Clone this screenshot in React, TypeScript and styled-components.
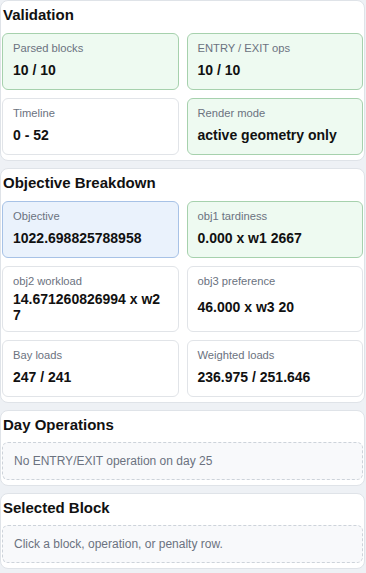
import React from 'react';
import styled, { createGlobalStyle } from 'styled-components';

type Tone = 'plain' | 'ok' | 'info';

interface Metric {
  label: string;
  value: string;
  tone?: Tone;
}

const GlobalStyle = createGlobalStyle`
  html, body {
    margin: 0;
    padding: 0;
    background: #eef1f5;
  }
  body {
    font-family: "Liberation Sans", Arial, sans-serif;
    color: #111827;
  }
`;

const Page = styled.div`
  display: flex;
  flex-direction: column;
  gap: 7px;
  padding: 0 1px 8px 0;
  width: 365px;
`;

const Panel = styled.section`
  background: #ffffff;
  border: 1px solid #dfe3e8;
  border-radius: 8px;
  padding: 5px 1px 5px 1px;
`;

const PanelTitle = styled.h2<{ $tight?: boolean }>`
  margin: 0 0 ${({ $tight }) => ($tight ? '9px' : '10px')} 1px;
  font-size: 15px;
  font-weight: 700;
  line-height: 17px;
  color: #111111;
`;

const CardGrid = styled.div`
  display: grid;
  grid-template-columns: 1fr 1fr;
  gap: 8px 8px;
`;

const toneStyles: Record<Tone, { bg: string; border: string }> = {
  plain: { bg: '#ffffff', border: '#e1e4e8' },
  ok: { bg: '#eefaf1', border: '#a6d1ad' },
  info: { bg: '#eaf2fc', border: '#a7c2e6' },
};

const Card = styled.div<{ $tone: Tone }>`
  box-sizing: border-box;
  min-height: 57px;
  display: flex;
  flex-direction: column;
  padding: 8px 10px;
  border-radius: 6px;
  border: 1px solid ${({ $tone }) => toneStyles[$tone].border};
  background: ${({ $tone }) => toneStyles[$tone].bg};
`;

const CardLabel = styled.div`
  font-size: 11.2px;
  color: #6b7280;
  margin-bottom: 4px;
`;

const CardValue = styled.div`
  margin: auto 0;
  font-size: 14px;
  font-weight: 700;
  line-height: 16px;
  color: #111111;
  word-break: break-all;
`;

const EmptyBox = styled.div`
  border: 1px dashed #cdd3da;
  border-radius: 6px;
  background: #f8f9fb;
  padding: 10.5px 11px;
  font-size: 12px;
  line-height: 15px;
  color: #6b7280;
`;

const validation: Metric[] = [
  { label: 'Parsed blocks', value: '10 / 10', tone: 'ok' },
  { label: 'ENTRY / EXIT ops', value: '10 / 10', tone: 'ok' },
  { label: 'Timeline', value: '0 - 52' },
  { label: 'Render mode', value: 'active geometry only', tone: 'ok' },
];

const objective: Metric[] = [
  { label: 'Objective', value: '1022.698825788958', tone: 'info' },
  { label: 'obj1 tardiness', value: '0.000 x w1 2667', tone: 'ok' },
  { label: 'obj2 workload', value: '14.671260826994 x w2 7' },
  { label: 'obj3 preference', value: '46.000 x w3 20' },
  { label: 'Bay loads', value: '247 / 241' },
  { label: 'Weighted loads', value: '236.975 / 251.646' },
];

const MetricGrid: React.FC<{ items: Metric[] }> = ({ items }) => (
  <CardGrid>
    {items.map((m) => (
      <Card key={m.label} $tone={m.tone ?? 'plain'}>
        <CardLabel>{m.label}</CardLabel>
        <CardValue>{m.value}</CardValue>
      </Card>
    ))}
  </CardGrid>
);

const App: React.FC = () => {
  return (
    <>
      <GlobalStyle />
      <Page>
        <Panel>
          <PanelTitle>Validation</PanelTitle>
          <MetricGrid items={validation} />
        </Panel>

        <Panel>
          <PanelTitle>Objective Breakdown</PanelTitle>
          <MetricGrid items={objective} />
        </Panel>

        <Panel>
          <PanelTitle $tight>Day Operations</PanelTitle>
          <EmptyBox>No ENTRY/EXIT operation on day 25</EmptyBox>
        </Panel>

        <Panel>
          <PanelTitle $tight>Selected Block</PanelTitle>
          <EmptyBox>Click a block, operation, or penalty row.</EmptyBox>
        </Panel>
      </Page>
    </>
  );
};

export default App;
